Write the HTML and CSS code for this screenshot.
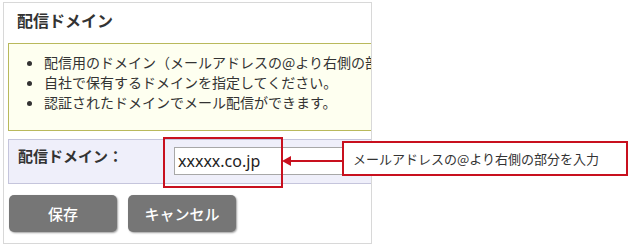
FILE: index.html
```html
<!DOCTYPE html>
<html lang="ja">
<head>
    <meta charset="UTF-8">
    <title>配信ドメイン</title>
    <link rel="stylesheet" href="styles.css">
</head>
<body>
<div class="stage">
    <div class="panel">
        <h2 class="panel-title">配信ドメイン</h2>
        <div class="notice">
            <ul>
                <li>配信用のドメイン（メールアドレスの@より右側の部分）を入力してください。</li>
                <li>自社で保有するドメインを指定してください。</li>
                <li>認証されたドメインでメール配信ができます。</li>
            </ul>
        </div>
        <div class="form-row">
            <label class="form-label" for="domain">配信ドメイン：</label>
            <input class="form-input" id="domain" type="text" value="xxxxx.co.jp">
        </div>
        <div class="actions">
            <button class="btn">保存</button>
            <button class="btn">キャンセル</button>
        </div>
    </div>

    <!-- annotation -->
    <div class="mark"></div>
    <svg class="arrow" width="62" height="12" viewBox="0 0 62 12">
        <line x1="8" y1="6" x2="62" y2="6" stroke="#c8101e" stroke-width="2"/>
        <polygon points="0,6 9,1 9,11" fill="#c8101e"/>
    </svg>
    <div class="callout">メールアドレスの@より右側の部分を入力</div>
</div>
</body>
</html>
```

FILE: styles.css
```css
* {
    box-sizing: border-box;
}

body {
    margin: 0;
    background: #FFFFFF;
    color: #333333;
    font-family: "Noto Sans CJK JP", "Noto Sans", sans-serif;
}

.stage {
    position: relative;
    width: 640px;
    height: 247px;
    padding: 2px 0 0 3px;
}

.panel {
    width: 369px;
    height: 242px;
    border: 1px solid #d8d8d8;
    overflow: hidden;
}

.panel-title {
    margin: 0;
    padding: 7px 0 0 13px;
    font-size: 16px;
    font-weight: 700;
    line-height: 20px;
    color: #333333;
}

.notice {
    width: 420px;
    margin: 13px 0 0 4px;
    border: 1px solid #b9b95c;
    background: #fefff0;
}

.notice ul {
    margin: 0;
    padding: 8px 0 18px 35px;
    white-space: nowrap;
}

.notice li {
    font-size: 14px;
    line-height: 20px;
}

.form-row {
    display: flex;
    align-items: flex-start;
    width: 420px;
    height: 45px;
    margin: 8px 0 0 4px;
    border: 1px solid #c5c5dc;
    background: #efeffa;
}

.form-label {
    flex: none;
    width: 165px;
    padding: 6px 0 0 9px;
    font-size: 15px;
    font-weight: 700;
    line-height: 20px;
}

.form-input {
    flex: none;
    width: 300px;
    height: 28px;
    margin-top: 7px;
    padding: 0 3px;
    border: 1px solid #a8a8a8;
    background: #FFFFFF;
    color: #222222;
    font-family: "Noto Sans", sans-serif;
    font-size: 16px;
}

.actions {
    display: flex;
    gap: 11px;
    margin: 11px 0 0 5px;
}

.btn {
    width: 108px;
    height: 37px;
    border: none;
    border-radius: 5px;
    background: #767676;
    box-shadow: 1px 1px 2px #a0a0a0;
    color: #FFFFFF;
    font-family: "Noto Sans CJK JP", sans-serif;
    font-size: 15px;
    font-weight: 500;
}

.mark {
    position: absolute;
    left: 163px;
    top: 137px;
    width: 120px;
    height: 51px;
    border: 2px solid #c8101e;
}

.arrow {
    position: absolute;
    left: 282px;
    top: 155px;
}

.callout {
    position: absolute;
    left: 342px;
    top: 141px;
    width: 286px;
    height: 35px;
    padding-left: 9px;
    border: 2px solid #c8101e;
    background: #FFFFFF;
    font-size: 13px;
    line-height: 31px;
    color: #333333;
}
```
